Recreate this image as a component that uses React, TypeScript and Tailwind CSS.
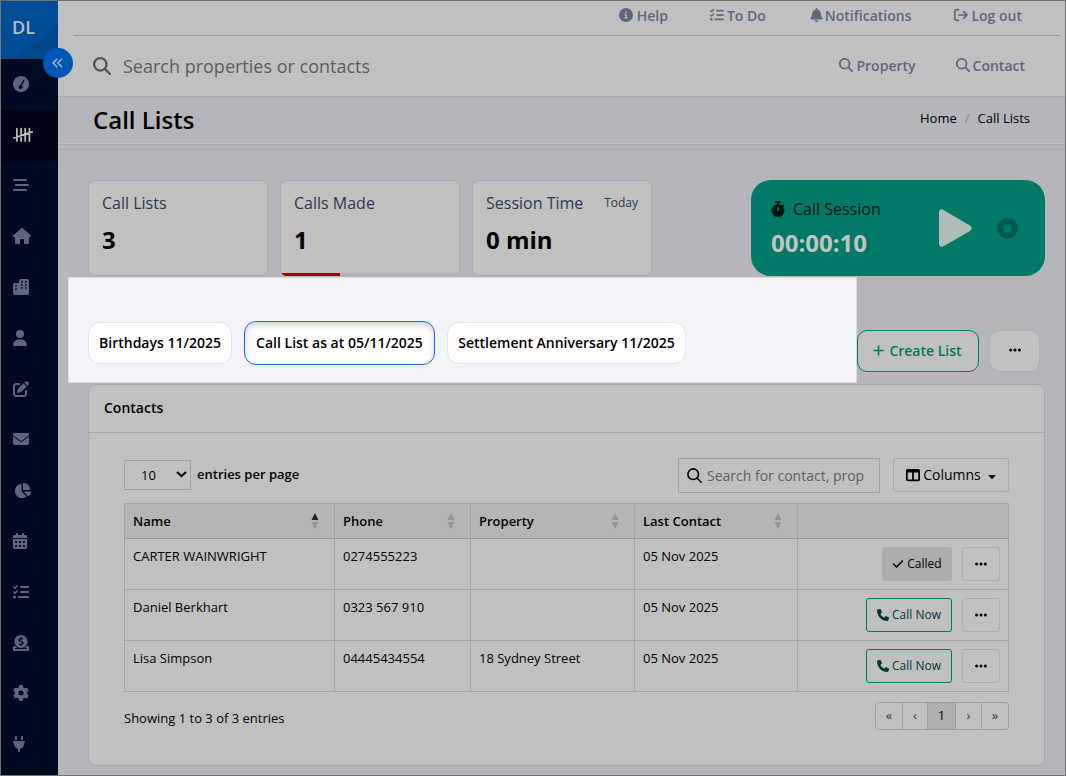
import React from "react";
import {
  FaBarsStaggered, FaHouse, FaUser, FaPenToSquare, FaEnvelope, FaChartPie, FaCalendarDays,
  FaListCheck, FaGear, FaPlug, FaCircleInfo, FaBell, FaMagnifyingGlass, FaPlus, FaEllipsis, FaCheck, FaPhone,
  FaTableColumns,
} from "react-icons/fa6";
import { FaDonate } from "react-icons/fa";

function Gauge() {
  return (
    <svg width="16" height="16" viewBox="0 0 16 16">
      <circle cx="8" cy="8" r="8" fill="currentColor" />
      <path d="M7.6 10.2 L11 4.2" stroke="#000a20" strokeWidth="1.4" strokeLinecap="round" />
      <circle cx="7.6" cy="11" r="2" fill="#000a20" />
    </svg>
  );
}

function Tally() {
  return (
    <svg width="20" height="16" viewBox="0 0 20 16" fill="none" stroke="currentColor" strokeWidth="1.7" strokeLinecap="round">
      <path d="M3.9 1.5v12.6M8.1 1.5v12.6M12.2 1.5v12.6M16.4 1.5v12.6M.9 11 19.2 4.9" />
    </svg>
  );
}

function Buildings() {
  return (
    <svg width="16" height="16" viewBox="0 0 16 16" fill="currentColor">
      <path fillRule="evenodd" d="M8 0h6q2 0 2 2v12q0 2-2 2H2q-2 0-2-2V6q0-2 2-2h4V2q0-2 2-2ZM8 2.200v1.600h1.600V2.200ZM12 2.200v1.600h1.600V2.200ZM8 5.200v1.600h1.600V5.200ZM12 5.200v1.600h1.600V5.200ZM8 8.200v1.600h1.600V8.200ZM12 8.200v1.600h1.600V8.200ZM2.200 6.200v1.600h1.600V6.200ZM2.200 9.200v1.600h1.600V9.200Z" />
    </svg>
  );
}

function LogOutIcon() {
  return (
    <svg width="14" height="14" viewBox="0 0 14 14" fill="none" stroke="currentColor" strokeWidth="1.7" strokeLinecap="round" strokeLinejoin="round">
      <path d="M4.6 1.7H2.8q-2 0-2 2v6.6q0 2 2 2h1.8M4.8 7h8.2M9.6 3.6 13 7 9.6 10.4" />
    </svg>
  );
}

function ThinSearch() {
  return (
    <svg width="15" height="15" viewBox="0 0 15 15" fill="none" stroke="black" strokeWidth="1.6" strokeLinecap="round">
      <circle cx="6.2" cy="6.200" r="5.300" /><path d="m10.200 10.200 4 4" />
    </svg>
  );
}

function Stopwatch() {
  return (
    <svg width="14" height="16" viewBox="0 0 14 16">
      <path d="M4.300 0h5.400v2H8v1.200a6.400 6.400 0 0 1 3 1.300l1.200-1.300 1.400 1.400-1.300 1.400A6.500 6.500 0 1 1 6 3.200V2H4.300Z" fill="currentColor" />
      <path d="M7 6.200v4" stroke="#007a66" strokeWidth="1.600" />
    </svg>
  );
}

function Sort({ up = false }: { up?: boolean }) {
  return (
    <svg width="8" height="16" viewBox="0 0 8 16">
      <path d="M4 0 7.500 7H.5Z" fill={up ? "#242424" : "#949494"} />
      <path d="M4 16 7.500 9H.5Z" fill="#949494" />
    </svg>
  );
}

const nav = [
  <Gauge />, <Tally />, <FaBarsStaggered size={16} />, <FaHouse size={18} className="h-4" />, <Buildings />,
  <FaUser size={16} className="w-3.5" />, <FaPenToSquare size={16} />, <FaEnvelope size={16} />, <FaChartPie size={17} className="ml-px" />,
  <FaCalendarDays size={16} className="w-3.5" />, <FaListCheck size={16} />, <FaDonate size={16} />, <FaGear size={16} />,
  <FaPlug size={16} className="w-3" />,
];

function Sidebar() {
  return (
    <aside className="relative w-[58px] shrink-0 border-l border-[#727272] bg-[#000a20]">
      <div className="flex h-[58px] items-center bg-[linear-gradient(145deg,#004c96_0_66%,#00478c_66%)] pb-[5px] pl-[11px] text-[18px] font-semibold text-[#b4bdc8]">DL</div>
      <div className="flex flex-col">
        {nav.map((icon, i) => (
          <div key={i} className={i === 1 ? "flex h-[50.8px] items-center bg-[#000415] pl-3 text-[#c0c0c0]" : "flex h-[50.8px] items-center pb-px pl-3 text-[#5c677d]"}>
            {icon}
          </div>
        ))}
      </div>
      <div className="absolute left-[42px] top-[47px] z-10 flex size-[30px] items-center justify-center rounded-full bg-[#0057b5] text-[#b4bdc8]">
        <svg width="11" height="10" viewBox="0 0 11 10" fill="none" stroke="currentColor" strokeWidth="1.300" className="mr-px">
          <path d="M5.300.7 1 5l4.300 4.300M10.100.7 5.800 5l4.300 4.300" />
        </svg>
      </div>
    </aside>
  );
}

function Header() {
  return (
    <header className="h-[97px] border-b border-[#a7a9ad] bg-[#c0c0c0] pl-[15px] pr-[5px] font-semibold text-[#5e6780]">
      <div className="flex h-9 items-center justify-end border-b border-[#999] pb-[5px] pr-[38px] text-[14px]">
        <span className="mr-[42px] flex items-center gap-1"><FaCircleInfo size={14} />Help</span>
        <span className="mr-[44px] flex items-center gap-[3px]"><FaListCheck size={14} />To Do</span>
        <span className="mr-[43px] flex items-center gap-[2px]"><FaBell size={14} className="w-[13px]" />Notifications</span>
        <span className="flex items-center gap-[3px]"><LogOutIcon />Log out</span>
      </div>
      <div className="flex h-[60px] items-center pl-5 pr-[35px] text-[14px]">
        <FaMagnifyingGlass size={18} className="mr-3 text-[#555]" />
        <span className="flex-1 text-[18px] font-normal text-[#5c5c5c]">Search properties or contacts</span>
        <span className="mr-10 flex items-center gap-[3px] pb-0.5"><FaMagnifyingGlass size={14} />Property</span>
        <span className="flex items-center gap-[3px] pb-0.5"><FaMagnifyingGlass size={14} />Contact</span>
      </div>
    </header>
  );
}

function Stat({ title, value, today = false, bar = false }: { title: string; value: string; today?: boolean; bar?: boolean }) {
  return (
    <div className={bar ? "flex h-24 w-[180px] flex-col overflow-hidden rounded-[6px] border border-b-0 border-[#a7a9ad] bg-[#c0c0c0]" : "flex h-24 w-[180px] flex-col overflow-hidden rounded-[6px] border border-[#a7a9ad] bg-[#c0c0c0]"}>
      <div className="flex h-[44px] items-center justify-between px-[13px] text-[16px] text-[#2b3a50]">
        <span>{title}</span>
        {today && <span className="text-[12px]">Today</span>}
      </div>
      <div className="flex-1 px-[13px] text-[24px] font-bold leading-[30px] text-black">{value}</div>
      {bar && <div className="h-[3px] bg-[#b0b2b8]"><div className="h-full w-[59px] bg-[#ac0000]" /></div>}
    </div>
  );
}

function Session() {
  return (
    <div className="flex h-24 w-[294px] items-center rounded-[20px] bg-[#007a66] pl-5 pr-[27px]">
      <div className="flex-1 pt-px">
        <div className="flex h-7 items-center gap-2 text-[16px] text-[#001510]"><Stopwatch />Call Session</div>
        <div className="mt-px text-[24px] font-bold leading-[38px] text-[#c0c5c3]">00:00:10</div>
      </div>
      <svg width="33" height="38" viewBox="0 0 33 38" className="mr-[25px]">
        <path d="M0 4Q0-1.500 5 1.200l25.500 15q4.500 3 0 6L5 37Q0 39.500 0 34Z" fill="#afbdba" />
      </svg>
      <svg width="21" height="21" viewBox="0 0 21 21">
        <circle cx="10.500" cy="10.500" r="10.300" fill="#005a4c" />
        <rect x="6.500" y="6.500" width="8" height="8" rx="1.500" fill="#007a66" />
      </svg>
    </div>
  );
}

const columns = ["Name", "Phone", "Property", "Last Contact", ""];
const rows = [
  ["CARTER WAINWRIGHT", "0274555223", "", "05 Nov 2025"],
  ["Daniel Berkhart", "0323 567 910", "", "05 Nov 2025"],
  ["Lisa Simpson", "04445434554", "18 Sydney Street", "05 Nov 2025"],
];

function ContactTable() {
  return (
    <table className="mt-[10px] w-[885px] table-fixed border-collapse text-[13px] text-black">
      <colgroup>
        <col className="w-[210px]" /><col className="w-[136px]" /><col className="w-[164px]" /><col className="w-[163px]" /><col />
      </colgroup>
      <thead>
        <tr className="h-[35px] bg-[#b5b5b5]">
          {columns.map((c, i) => (
            <th key={i} className="border border-[#a5a6a8] border-b-[#9b9b9b] p-0 pl-2 pr-[15px] text-left font-semibold">
              {c && <div className="flex items-center justify-between"><span className="pt-0.5">{c}</span><Sort up={i === 0} /></div>}
            </th>
          ))}
        </tr>
      </thead>
      <tbody>
        {rows.map((r, i) => (
          <tr key={i} className="h-[51px]">
            {r.map((c, j) => <td key={j} className="border border-[#a5a6a8] px-2 pb-0 pt-[7px] align-top leading-5">{c}</td>)}
            <td className="border border-[#a5a6a8] p-0 pr-2">
              <div className="flex items-center justify-end gap-[10px] text-[12px]">
                {i === 0 ? (
                  <span className="flex h-[34px] w-[70px] items-center justify-center gap-[3px] rounded-[3px] bg-[#adadad]"><FaCheck size={12} />Called</span>
                ) : (
                  <span className="flex h-[34px] w-[86px] items-center justify-center gap-[3px] rounded-[3px] border border-[#007a5c] text-[#00383a]"><FaPhone size={12} />Call Now</span>
                )}
                <span className="flex h-[34px] w-[38px] items-center justify-center rounded-[3px] border border-[#acadae]"><FaEllipsis size={14} /></span>
              </div>
            </td>
          </tr>
        ))}
      </tbody>
    </table>
  );
}

function Contacts() {
  return (
    <section className="h-[382px] w-[957px] rounded-[8px] border border-[#a7a9ad] bg-[#c0c0c0] text-black">
      <h2 className="flex h-12 items-center border-b border-[#a7a9ad] pb-0.5 pl-[15px] text-[14px] font-semibold">Contacts</h2>
      <div className="w-[920px] pl-[35px] pt-[25px]">
        <div className="flex h-[35px] items-center">
          <span className="-mt-0.5 flex h-[30px] w-[67px] items-center justify-between border border-[#a1a2a3] pl-4 pr-[3px] text-[13px]">
            <span className="pt-0.5">10</span>
            <svg width="11" height="7" viewBox="0 0 11 7" fill="none" stroke="black" strokeWidth="2.200"><path d="m1 1 4.500 4L10 1" /></svg>
          </span>
          <span className="-mt-0.5 ml-1.5 flex-1 text-[13px] font-semibold">entries per page</span>
          <span className="flex h-[35px] w-[202px] items-center gap-[5px] border border-[#a1a2a3] pl-2 text-[14px] text-[#606060]">
            <ThinSearch />Search for contact, prop
          </span>
          <span className="-mt-px ml-[13px] flex h-[34px] w-[116px] items-center justify-center rounded-[3px] border border-[#a7a8a9] text-[14px]">
            <FaTableColumns size={14} className="mr-[3px]" /><span className="pb-0.5">Columns</span>
            <svg width="8" height="4" viewBox="0 0 8 4" className="ml-[7px] mt-1"><path d="M0 0h8L4 4Z" /></svg>
          </span>
        </div>
        <ContactTable />
        <div className="mt-[10px] flex items-center justify-between text-[13px]">
          <span className="mt-1.5">Showing 1 to 3 of 3 entries</span>
          <div className="flex h-7 overflow-hidden rounded-[4px] border border-[#9fa0a2] text-[#383838]">
            <span className="flex w-[26px] items-center justify-center">«</span>
            <span className="flex w-[25px] items-center justify-center border-l border-[#9fa0a2]">‹</span>
            <span className="flex w-[29px] items-center justify-center border-x border-[#9fa0a2] bg-[#b0b0b0] text-black">1</span>
            <span className="flex w-[25px] items-center justify-center">›</span>
            <span className="flex w-[27px] items-center justify-center border-l border-[#9fa0a2]">»</span>
          </div>
        </div>
      </div>
    </section>
  );
}

export default function App() {
  return (
    <div className="flex h-[776px] w-[1066px] overflow-hidden border-y border-r border-[#727272] bg-[#b4b6bb] font-['Open_Sans','Noto_Sans',sans-serif]">
      <Sidebar />
      <main className="-mt-px flex min-w-0 flex-1 flex-col">
        <Header />
        <div className="flex h-[47px] items-center justify-between border-b border-[#c0c0c0] pl-[35px] pr-[35px] text-black">
          <h1 className="text-[24px] font-semibold">Call Lists</h1>
          <div className="flex gap-2 pb-0.5 text-[13px]"><span>Home</span><span className="text-[#85878c]">/</span><span>Call Lists</span></div>
        </div>
        <div className="h-1.5 border-y border-[#a7a9ad]" />
        <div className="flex h-[126px] shrink-0 items-end pl-[30px] pr-5">
          <div className="flex gap-3">
            <Stat title="Call Lists" value="3" />
            <Stat title="Calls Made" value="1" bar />
            <Stat title="Session Time" value="0 min" today />
          </div>
          <div className="ml-auto"><Session /></div>
        </div>
        <div className="flex h-[107px] shrink-0 pl-[10px]">
          <div className="mt-px flex h-[106px] w-[789px] items-center gap-3 border border-[#d8dade] bg-[#f3f4f9] pl-[19px] pt-[26px] text-[14px] font-semibold text-black">
            <span className="flex h-[42px] w-36 items-center justify-center rounded-[12px] border border-[#e4e5e8] bg-white pb-0.5">Birthdays 11/2025</span>
            <span className="flex h-11 w-[191px] items-center justify-center rounded-[12px] border border-[#2563eb] bg-white pb-0.5 shadow-[inset_0_3px_6px_rgba(0,0,0,0.18)]">Call List as at 05/11/2025</span>
            <span className="flex h-[42px] w-[239px] items-center justify-center rounded-[12px] border border-[#e4e5e8] bg-white pb-0.5">Settlement Anniversary 11/2025</span>
          </div>
          <div className="flex gap-[10px] pt-[54px]">
            <span className="flex h-[42px] w-[122px] items-center justify-center gap-1 rounded-[10px] border border-[#007a5c] bg-[#c0c0c0] pb-0.5 pr-0.5 text-[14px] font-semibold text-[#007a5c]"><FaPlus size={13} />Create List</span>
            <span className="flex h-[42px] w-[51px] items-center justify-center rounded-[10px] border border-[#acadae] bg-[#c0c0c0] pb-0.5 text-black"><FaEllipsis size={14} /></span>
          </div>
        </div>
        <div className="shrink-0 pl-[30px] pt-px"><Contacts /></div>
      </main>
    </div>
  );
}
